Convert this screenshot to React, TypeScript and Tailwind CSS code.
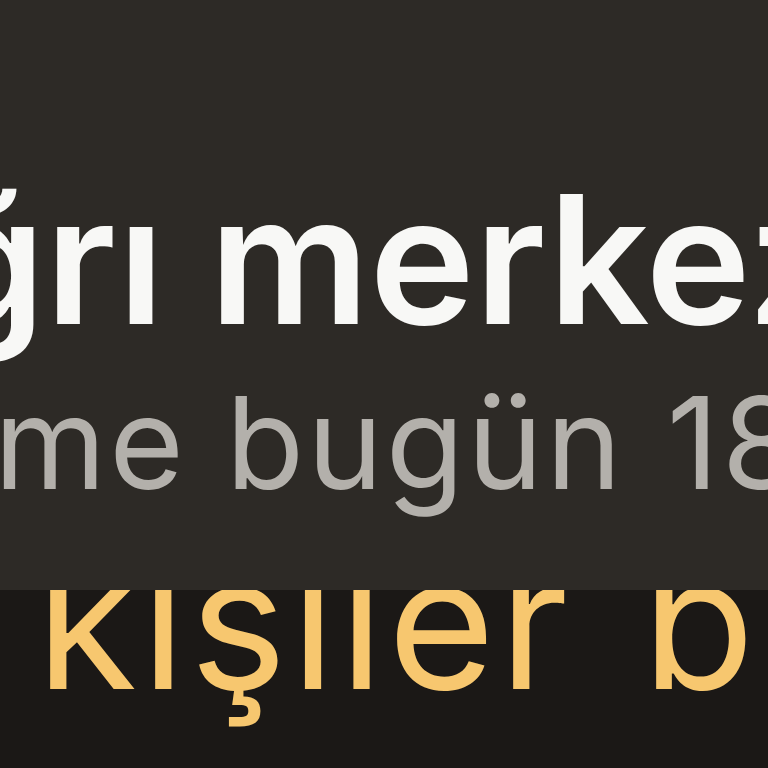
export default function App() {
  return (
    <div
      className="w-[768px] h-[768px] overflow-hidden flex flex-col bg-[#1b1816]"
      style={{ fontFamily: "Inter, 'Liberation Sans', sans-serif" }}
    >
      <div className="h-[590px] shrink-0 bg-[#2d2a26] pt-[171px] overflow-hidden flex flex-col">
        <div className="whitespace-nowrap ml-[-66px] text-[178px] leading-[178px] font-semibold text-[#f8f8f6]">
          ğrı merkezi
        </div>
        <div className="whitespace-nowrap ml-[-6px] mt-[30px] text-[128px] leading-[128px] font-normal tracking-[3px] text-[#b3b0ab]">
          me bugün<span className="ml-[42px]">18:00</span>
        </div>
      </div>
      <div className="flex-1 overflow-hidden">
        <div className="whitespace-nowrap pl-[36px] text-[184px] leading-[64px] font-normal tracking-[4px] [word-spacing:14px] text-[#f7c76f]">
          kişiler bu
        </div>
      </div>
    </div>
  );
}
